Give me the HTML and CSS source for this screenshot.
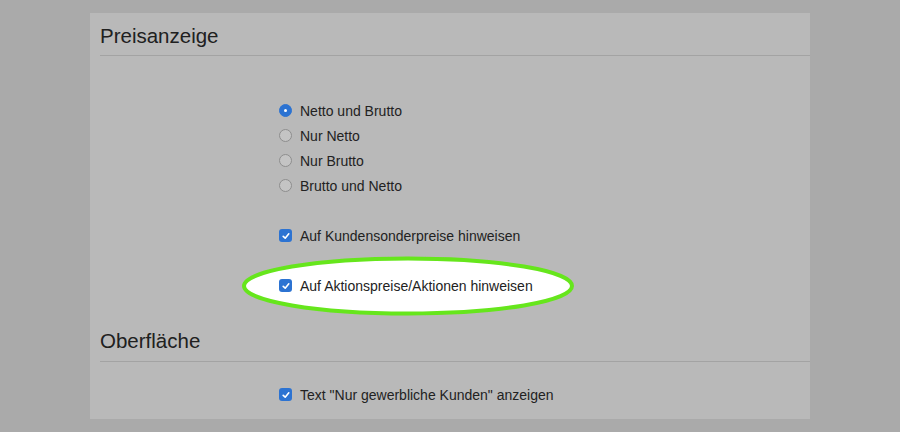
FILE: index.html
```html
<!DOCTYPE html>
<html lang="de">
<head>
<meta charset="utf-8">
<title>Einstellungen</title>
<link rel="stylesheet" href="styles.css">
</head>
<body>
<div class="panel">
  <section class="section">
    <h2 class="heading">Preisanzeige</h2>
    <div class="options first">
      <div class="row"><span class="radio on"></span><span class="label">Netto und Brutto</span></div>
      <div class="row"><span class="radio"></span><span class="label">Nur Netto</span></div>
      <div class="row"><span class="radio"></span><span class="label">Nur Brutto</span></div>
      <div class="row"><span class="radio"></span><span class="label">Brutto und Netto</span></div>
      <div class="row gap"><span class="check"><svg viewBox="0 0 12 12" width="12" height="12"><path d="M3.2 6.3 L5.2 8.2 L8.8 3.8" fill="none" stroke="#fff" stroke-width="1.6" stroke-linecap="round" stroke-linejoin="round"/></svg></span><span class="label">Auf Kundensonderpreise hinweisen</span></div>
      <div class="row gap highlight">
        <svg class="ellipse" width="340" height="66" viewBox="0 0 340 66">
          <defs>
            <filter id="blur" x="-10%" y="-30%" width="120%" height="160%"><feGaussianBlur stdDeviation="0.6"/></filter>
          </defs>
          <ellipse cx="170" cy="32" rx="164" ry="27.5" fill="#fff" stroke="#66e61c" stroke-width="4" filter="url(#blur)"/>
        </svg>
        <span class="check"><svg viewBox="0 0 12 12" width="12" height="12"><path d="M3.2 6.3 L5.2 8.2 L8.8 3.8" fill="none" stroke="#fff" stroke-width="1.6" stroke-linecap="round" stroke-linejoin="round"/></svg></span><span class="label">Auf Aktionspreise/Aktionen hinweisen</span>
      </div>
    </div>
  </section>
  <section class="section second">
    <h2 class="heading">Oberfläche</h2>
    <div class="options">
      <div class="row"><span class="check"><svg viewBox="0 0 12 12" width="12" height="12"><path d="M3.2 6.3 L5.2 8.2 L8.8 3.8" fill="none" stroke="#fff" stroke-width="1.6" stroke-linecap="round" stroke-linejoin="round"/></svg></span><span class="label">Text "Nur gewerbliche Kunden" anzeigen</span></div>
    </div>
  </section>
</div>
</body>
</html>
```
FILE: styles.css
```css
html, body {
  margin: 0;
  padding: 0;
  background: #aaaaaa;
  font-family: "Liberation Sans", Arial, Helvetica, sans-serif;
  color: #222;
  overflow: hidden;
}
.panel {
  margin: 13px 0 0 90px;
  width: 720px;
  height: 406px;
  background: #b9b9b9;
  box-sizing: border-box;
  padding-left: 10px;
}
.section.second {
  margin-top: 20px;
}
.heading {
  margin: 0;
  font-weight: normal;
  font-size: 20.5px;
  line-height: 24px;
  padding-top: 11px;
  padding-bottom: 7px;
  border-bottom: 1px solid #a3a3a3;
  color: #202020;
}
.section.second .heading {
  padding-top: 11px;
  padding-bottom: 8px;
}
.options {
  padding-left: 179px;
  padding-top: 20px;
}
.options.first {
  padding-top: 42px;
}
.row {
  display: flex;
  align-items: center;
  height: 25px;
  font-size: 14px;
  position: relative;
}
.row.gap {
  margin-top: 25px;
}
.label {
  position: relative;
  z-index: 1;
  margin-left: 8px;
}
.radio {
  width: 11px;
  height: 11px;
  border-radius: 50%;
  border: 1px solid #8e8e8e;
  background: #c4c4c4;
  position: relative;
  flex: none;
}
.radio.on {
  background: #2c73d2;
  border-color: #2c73d2;
}
.radio.on::after {
  content: "";
  position: absolute;
  left: 4px;
  top: 4px;
  width: 3px;
  height: 3px;
  border-radius: 50%;
  background: #fff;
}
.check {
  width: 13px;
  height: 13px;
  border-radius: 3px;
  background: #2c73d2;
  display: flex;
  align-items: center;
  justify-content: center;
  position: relative;
  z-index: 1;
  flex: none;
}
.check svg {
  display: block;
}
.ellipse {
  position: absolute;
  left: -41px;
  top: -19px;
  z-index: 0;
}
```
